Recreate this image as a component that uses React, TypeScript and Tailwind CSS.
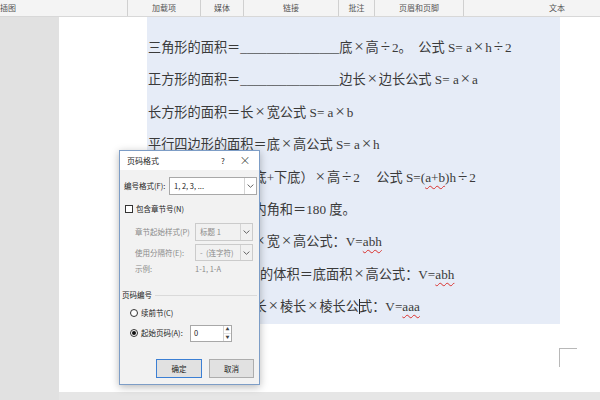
import type { ReactNode } from 'react'
import clsx from 'clsx'

// Word-style page, selected formulas, and the 页码格式 dialog on top.

function Op({ children }: { children: ReactNode }) {
  return (
    <span className="inline-block w-[13.2px] text-center text-[17px] leading-none font-['Liberation_Serif',serif]">
      {children}
    </span>
  )
}

function Sq({ children }: { children: ReactNode }) {
  return (
    <span className="underline decoration-wavy decoration-[#d9302c] decoration-1 underline-offset-[3px]">
      {children}
    </span>
  )
}

function Caret() {
  return <span className="inline-block w-px h-[15px] bg-[#222] align-[-3px] -mr-px" />
}

function Line({ children }: { children: ReactNode }) {
  return <p className="h-[32.4px] leading-[32.4px] whitespace-pre pl-[1px]">{children}</p>
}

function Toolbar() {
  return (
    <div className="flex h-[17px] bg-[#f4f4f4] border-b border-[#d8d8d8] text-[8px] text-[#555] font-['Noto_Sans_CJK_SC',sans-serif] leading-none overflow-hidden">
      <div className="w-[128px] shrink-0 flex items-center border-r border-[#d0d0d0]">插图</div>
      <div className="w-[73px] shrink-0 flex items-center justify-center border-r border-[#d0d0d0]">加载项</div>
      <div className="w-[43px] shrink-0 flex items-center justify-center border-r border-[#d0d0d0]">媒体</div>
      <div className="w-[95px] shrink-0 flex items-center justify-center border-r border-[#d0d0d0]">链接</div>
      <div className="w-[36px] shrink-0 flex items-center justify-center border-r border-[#d0d0d0]">批注</div>
      <div className="w-[89px] shrink-0 flex items-center justify-center border-r border-[#d0d0d0]">页眉和页脚</div>
      <div className="w-[186px] shrink-0 flex items-center justify-center">文本</div>
    </div>
  )
}

function Chevron() {
  return (
    <svg width="7" height="4" viewBox="0 0 7 4">
      <path d="M0.6 0.6 L3.5 3.3 L6.4 0.6" fill="none" stroke="#555" strokeWidth="0.9" />
    </svg>
  )
}

function Select({ value, disabled, className }: { value: string; disabled?: boolean; className?: string }) {
  return (
    <div
      className={clsx(
        'flex border',
        disabled ? 'border-[#cbcbcb] bg-[#f1f1f1] text-[#8a8a8a]' : 'border-[#a8a8a8] bg-white text-[#222]',
        className,
      )}
    >
      <span className="flex-1 pl-[4px] flex items-center whitespace-pre">{value}</span>
      <span className="w-[12px] border-l border-[#d4d4d4] flex items-center justify-center">
        <Chevron />
      </span>
    </div>
  )
}

function Radio({ checked }: { checked?: boolean }) {
  return (
    <span className="w-[8px] h-[8px] shrink-0 rounded-full border border-[#333] bg-white flex items-center justify-center">
      {checked && <span className="w-[4px] h-[4px] rounded-full bg-[#111]" />}
    </span>
  )
}

function PageNumberDialog() {
  return (
    <div className="absolute left-[119px] top-[150px] w-[141px] h-[235px] flex flex-col border border-[#7d9dc6] bg-[#f2f2f2] shadow-[0_2px_8px_rgba(0,0,0,0.28)] text-[7.5px] text-[#222] leading-none font-['Noto_Sans_CJK_SC',sans-serif]">
      <div className="h-[19px] shrink-0 flex items-center bg-white pl-[7px]">
        <span className="flex-1 text-[8px]">页码格式</span>
        <span className="w-[10px] text-[8px]">?</span>
        <span className="w-[28px] flex justify-center text-[11px] font-light">×</span>
      </div>

      <div className="flex flex-col pl-[4px] pr-[2px] pt-[7px]">
        <div className="h-[18px] flex items-center">
          <span className="w-[45px]">编号格式(F):</span>
          <Select value="1, 2, 3, ..." className="w-[88px] h-[18px]" />
        </div>

        <div className="mt-[5px] h-[18px] flex items-center gap-[3px] pl-[1px]">
          <span className="w-[8px] h-[8px] shrink-0 border border-[#333] bg-white" />
          <span>包含章节号(N)</span>
        </div>

        <div className="mt-[5px] h-[18px] flex items-center pl-[11px] text-[#8a8a8a]">
          <span className="w-[60px]">章节起始样式(P)</span>
          <Select value="标题 1" disabled className="w-[58px] h-[18px]" />
        </div>

        <div className="mt-[3px] h-[17px] flex items-center pl-[11px] text-[#8a8a8a]">
          <span className="w-[60px]">使用分隔符(E):</span>
          <Select value="-  (连字符)" disabled className="w-[58px] h-[17px]" />
        </div>

        <div className="mt-[1px] h-[14px] flex items-center pl-[11px] text-[#8a8a8a]">
          <span className="w-[60px]">示例:</span>
          <span>1-1, 1-A</span>
        </div>

        <div className="mt-[12px] h-[14px] flex items-center gap-[3px] -ml-[2px]">
          <span>页码编号</span>
          <span className="flex-1 h-px bg-[#dadada]" />
        </div>

        <div className="mt-[4px] h-[14px] flex items-center gap-[3px] pl-[6px]">
          <Radio />
          <span>续前节(C)</span>
        </div>

        <div className="mt-[4px] h-[18px] flex items-center pl-[6px]">
          <Radio checked />
          <span className="ml-[3px] w-[49px]">起始页码(A):</span>
          <div className="w-[42px] h-[17px] flex border border-[#a8a8a8] bg-white">
            <span className="flex-1 pl-[3px] flex items-center">0</span>
            <span className="w-[8px] flex flex-col border-l border-[#d4d4d4]">
              <span className="flex-1 flex items-center justify-center text-[4px] text-[#444] border-b border-[#e0e0e0]">▲</span>
              <span className="flex-1 flex items-center justify-center text-[4px] text-[#444]">▼</span>
            </span>
          </div>
        </div>

        <div className="mt-[17px] h-[19px] flex justify-end gap-[7px] pr-[3px]">
          <button className="w-[46px] h-[19px] border-[1.5px] border-[#3b7fd4] bg-[#e1e1e1] text-[7.5px] text-[#222]">确定</button>
          <button className="w-[45px] h-[19px] border border-[#adadad] bg-[#e1e1e1] text-[7.5px] text-[#222]">取消</button>
        </div>
      </div>
    </div>
  )
}

export default function App() {
  return (
    <div className="relative w-[600px] h-[400px] overflow-hidden bg-[#e3e3e3]">
      <Toolbar />
      <div className="flex h-[383px]">
        <div className="w-[59px] shrink-0 bg-[#e1e1e1]" />
        <div className="flex-1 flex flex-col">
          <div className="h-[375px] bg-white">
            <div className="ml-[88px] w-[413px] bg-[#e6ecf7] pt-[15px] text-[13.2px] text-[#3a3a3a] font-['Liberation_Serif','Noto_Sans_CJK_SC',serif]">
              <Line>
                三角形的面积＝_______________底<Op>×</Op>高<Op>÷</Op>2。{'\u3000'}公式 S= a<Op>×</Op>h<Op>÷</Op>2
              </Line>
              <Line>
                正方形的面积＝_______________边长<Op>×</Op>边长公式 S= a<Op>×</Op>a
              </Line>
              <Line>
                长方形的面积＝长<Op>×</Op>宽公式 S= a<Op>×</Op>b
              </Line>
              <Line>
                平行四边形的面积＝底<Op>×</Op>高公式 S= a<Op>×</Op>h
              </Line>
              <Line>
                梯形的面积＝（上底+下底）<Op>×</Op>高<Op>÷</Op>2{'\u3000'} 公式 S=(<Sq>a+b</Sq>)h<Op>÷</Op>2
              </Line>
              <Line>任意三角形的三个内角和＝180 度。</Line>
              <Line>
                长方体的体积＝长<Op>×</Op>宽<Op>×</Op>高公式：V=<Sq>abh</Sq>
              </Line>
              <Line>
                长方体（正方体）{'\u3000'}的体积＝底面积<Op>×</Op>高公式：V=<Sq>abh</Sq>
              </Line>
              <Line>
                正方体的体积＝棱长<Op>×</Op>棱长<Op>×</Op>棱长公<Caret />式：V=<Sq>aaa</Sq>
              </Line>
            </div>
            <div className="ml-[500px] mt-[24px] w-[18px] h-[19px] border-l border-t border-[#b8b8b8]" />
          </div>
          <div className="flex-1 bg-[#e6e6e6]" />
        </div>
      </div>
      <PageNumberDialog />
    </div>
  )
}
